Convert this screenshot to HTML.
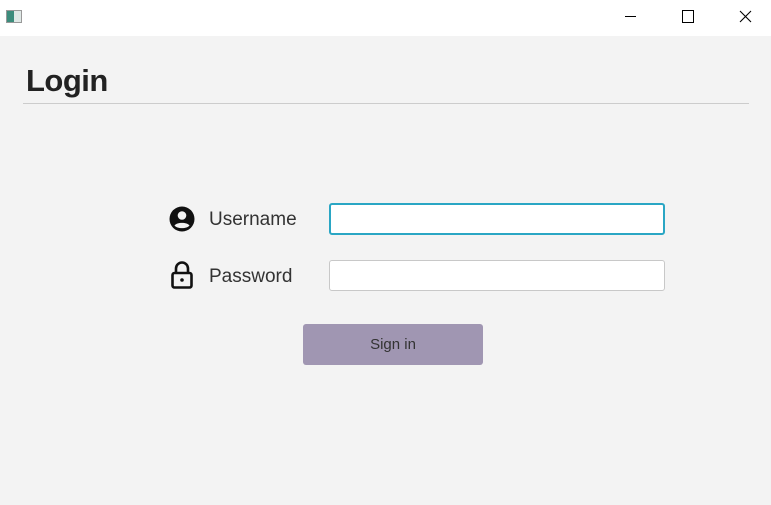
<!DOCTYPE html>
<html><head><style>
body{margin:0;width:771px;height:505px;background:#f3f3f3;font-family:"Liberation Sans",sans-serif;position:relative;overflow:hidden}
.tb{position:absolute;left:0;top:0;width:771px;height:36px;background:#fff}
.a{position:absolute}
</style></head><body>
<div class="tb">
<div class="a" style="left:6px;top:10px;width:14px;height:11px;border:1px solid #999;background:#dfe8e6"><div style="width:7px;height:11px;background:#3c8c7c"></div></div>
<div class="a" style="left:625px;top:16px;width:11px;height:1px;background:#000"></div>
<div class="a" style="left:682px;top:10px;width:10px;height:11px;border:1px solid #000"></div>
<svg class="a" style="left:739px;top:10px" width="13" height="13"><path d="M1 1L12 12M12 1L1 12" stroke="#000" stroke-width="1.1"/></svg>
</div>
<div class="a" style="left:26px;top:63px;font-size:31px;font-weight:bold;color:#222;letter-spacing:-0.5px">Login</div>
<div class="a" style="left:23px;top:103px;width:726px;height:1px;background:#ccc"></div>
<svg class="a" style="left:169px;top:206px" width="26" height="26" viewBox="0 0 26 26"><circle cx="13" cy="13" r="12.5" fill="#111"/><circle cx="13" cy="9.5" r="4.3" fill="#f3f3f3"/><path d="M5.5 19.5C8 16 18 16 20.5 19.5C18 23 8 23 5.5 19.5Z" fill="#f3f3f3"/></svg>
<svg class="a" style="left:171px;top:261px" width="22" height="28" viewBox="0 0 22 28"><path d="M5 12V7.5a6 6 0 0 1 12 0V12" fill="none" stroke="#111" stroke-width="2.6"/><rect x="1.5" y="12" width="19" height="14.5" rx="2" fill="none" stroke="#111" stroke-width="2.6"/><circle cx="11" cy="19" r="1.8" fill="#111"/></svg>
<div class="a" style="left:209px;top:209px;font-size:19px;color:#333">Username</div>
<div class="a" style="left:209px;top:266px;font-size:19px;color:#333">Password</div>
<div class="a" style="left:329px;top:203px;width:332px;height:28px;background:#fff;border:2px solid #2aa6c4;border-radius:3px"></div>
<div class="a" style="left:329px;top:260px;width:334px;height:29px;background:#fff;border:1px solid #c8c8c8;border-radius:3px"></div>
<div class="a" style="left:303px;top:324px;width:180px;height:41px;background:#a096b2;border-radius:3px;color:#333;font-size:15px;line-height:42px;text-align:center">Sign in</div>
</body></html>
